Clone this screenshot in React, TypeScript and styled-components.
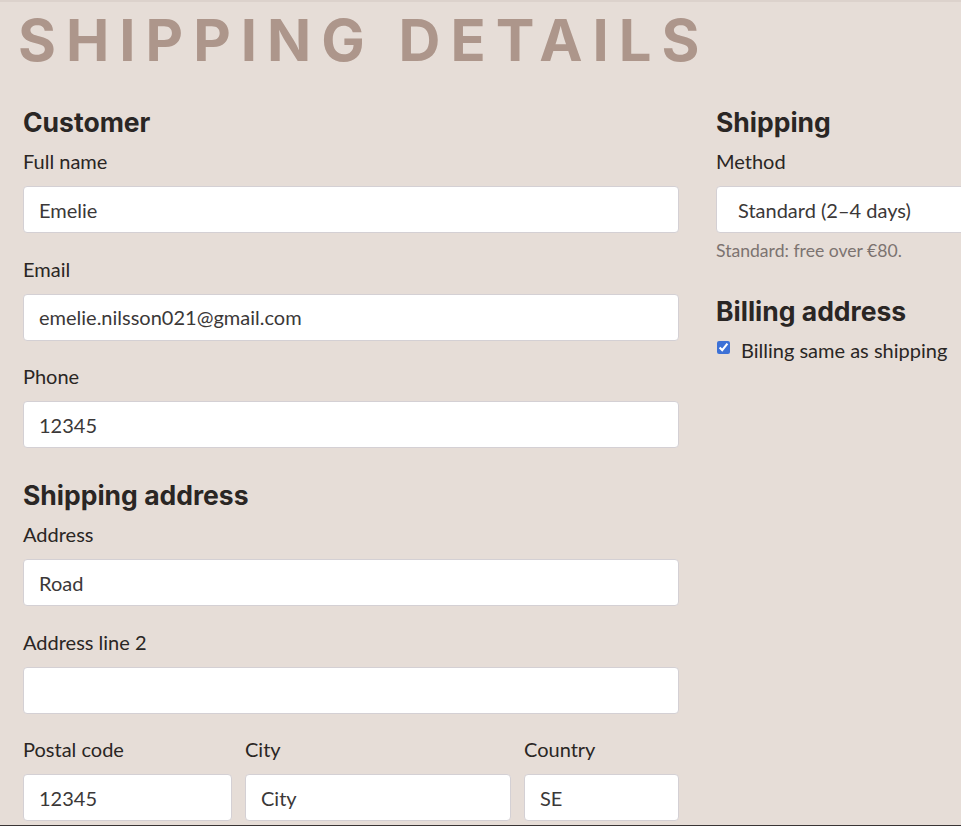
import styled, { createGlobalStyle } from 'styled-components';

const GlobalStyle = createGlobalStyle`
  html, body {
    margin: 0;
    padding: 0;
    overflow: hidden;
    background: #e6ddd7;
  }
  body {
    font-family: Lato, 'Liberation Sans', sans-serif;
    color: #2a2624;
  }
  * {
    box-sizing: border-box;
  }
`;

export default function App() {
  return (
    <>
      <GlobalStyle />
      <StyledPage>
        <Title>Shipping Details</Title>

        <FormGrid>
          <Column $gap={29}>
            <Section>
              <SectionTitle>Customer</SectionTitle>
              <Field>
                <Label htmlFor="fullname">Full name</Label>
                <Input id="fullname" defaultValue="Emelie" />
              </Field>
              <Field>
                <Label htmlFor="email">Email</Label>
                <Input id="email" defaultValue="emelie.nilsson021@gmail.com" />
              </Field>
              <Field>
                <Label htmlFor="phone">Phone</Label>
                <Input id="phone" defaultValue="12345" />
              </Field>
            </Section>

            <Section>
              <SectionTitle>Shipping address</SectionTitle>
              <Field>
                <Label htmlFor="address">Address</Label>
                <Input id="address" defaultValue="Road" />
              </Field>
              <Field>
                <Label htmlFor="address2">Address line 2</Label>
                <Input id="address2" defaultValue="" />
              </Field>
              <Row>
                <Field>
                  <Label htmlFor="postal">Postal code</Label>
                  <Input id="postal" defaultValue="12345" />
                </Field>
                <Field>
                  <Label htmlFor="city">City</Label>
                  <Input id="city" defaultValue="City" />
                </Field>
                <Field>
                  <Label htmlFor="country">Country</Label>
                  <Input id="country" defaultValue="SE" />
                </Field>
              </Row>
            </Section>
          </Column>

          <Column $gap={31}>
            <Section>
              <SectionTitle>Shipping</SectionTitle>
              <Field>
                <Label htmlFor="method">Method</Label>
                <Select id="method" defaultValue="standard">
                  <option value="standard">Standard (2–4 days)</option>
                  <option value="express">Express (1–2 days)</option>
                </Select>
                <Hint>Standard: free over €80.</Hint>
              </Field>
            </Section>

            <Section>
              <SectionTitle>Billing address</SectionTitle>
              <CheckRow>
                <input type="checkbox" defaultChecked />
                Billing same as shipping
              </CheckRow>
            </Section>
          </Column>
        </FormGrid>

        <Footer />
      </StyledPage>
    </>
  );
}

const StyledPage = styled.main`
  border-top: 2px solid #dcd2cc;
  padding: 0 0 0 23px;
  overflow: hidden;
`;

const Title = styled.h1`
  margin: 2px 0 0 -5px;
  font-family: Inter, 'Noto Sans', sans-serif;
  font-weight: 700;
  font-size: 58px;
  line-height: 72px;
  letter-spacing: 10px;
  text-transform: uppercase;
  color: #ad968b;
`;

const FormGrid = styled.div`
  display: grid;
  grid-template-columns: 656px 320px;
  gap: 37px;
  margin-top: 28px;
`;

const Column = styled.div<{ $gap: number }>`
  display: flex;
  flex-direction: column;
  gap: ${(p) => p.$gap}px;
`;

const Section = styled.section`
  display: flex;
  flex-direction: column;
`;

const SectionTitle = styled.h2`
  margin: 0 0 11px;
  padding-top: 2px;
  font-family: Inter, 'Noto Sans', sans-serif;
  font-weight: 700;
  font-size: 26.5px;
  line-height: 32px;
  color: #2a2624;
`;

const Field = styled.div`
  display: flex;
  flex-direction: column;
  min-width: 0;

  & + & {
    margin-top: 23.5px;
  }
`;

const Row = styled.div`
  display: grid;
  grid-template-columns: 209fr 266fr 155fr;
  gap: 13px;
  margin-top: 23.5px;

  ${Field} + ${Field} {
    margin-top: 0;
  }
`;

const Label = styled.label`
  display: block;
  font-size: 20px;
  line-height: 24px;
  margin-bottom: 13px;
  color: #2a2624;
`;

const Input = styled.input`
  height: 47px;
  width: 100%;
  padding: 0 15px;
  border: 1px solid #d4d0d4;
  border-radius: 4px;
  background: #fff;
  font-family: Lato, 'Liberation Sans', sans-serif;
  font-size: 20px;
  color: #3b3838;
  outline: none;
`;

const Select = styled.select`
  appearance: none;
  height: 47px;
  width: 100%;
  padding: 0 16px 0 21px;
  border: 1px solid #d4d0d4;
  border-radius: 4px;
  background: #fff;
  font-family: Lato, 'Liberation Sans', sans-serif;
  font-size: 20px;
  color: #3b3838;
`;

const Hint = styled.p`
  margin: 7px 0 0;
  font-size: 17.6px;
  line-height: 22px;
  color: #7c7370;
`;

const CheckRow = styled.label`
  display: flex;
  align-items: flex-start;
  gap: 11px;
  font-size: 20px;
  line-height: 24px;
  color: #2a2624;

  input {
    margin: 3px 0 0 1px;
    width: 13px;
    height: 13px;
    accent-color: #3d71d6;
  }
`;

const Footer = styled.footer`
  height: 80px;
  margin-top: 4px;
  margin-left: -23px;
  background: #3a3535;
`;
